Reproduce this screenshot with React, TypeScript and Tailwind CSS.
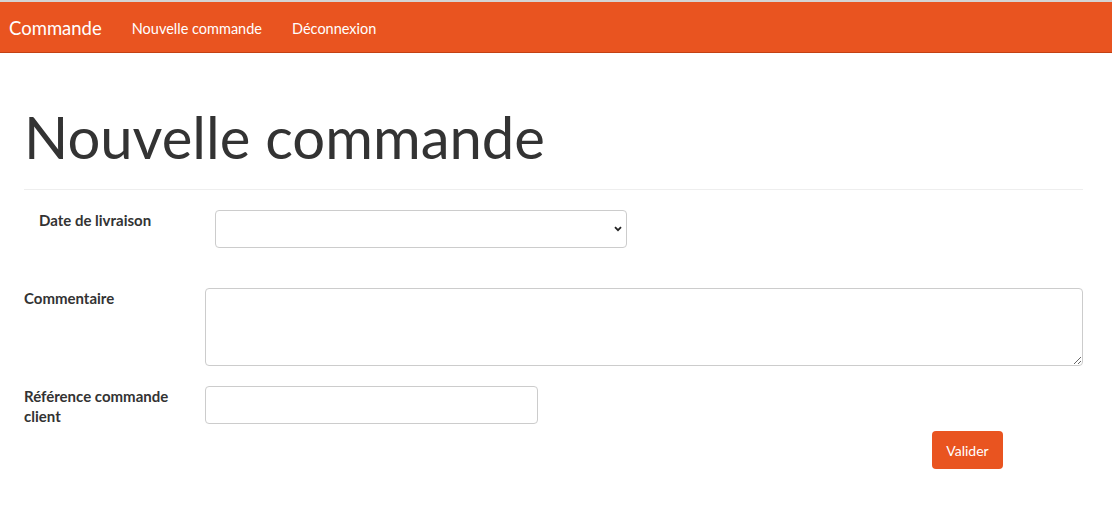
import React from 'react';

const font = { fontFamily: 'Lato, "Open Sans", sans-serif' };

const Navbar: React.FC = () => (
  <nav className="border-t-2 border-[#d4d4d4] bg-[#e95420] border-b border-b-[#c34113]">
    <div className="flex items-center h-[50px] pl-[9px] pt-[3px]">
      <span className="text-[18.5px] text-white mr-[30px]">Commande</span>
      <span className="text-[14.5px] text-white mr-[30px]">Nouvelle commande</span>
      <span className="text-[14.5px] text-white">Déconnexion</span>
    </div>
  </nav>
);

export default function App() {
  return (
    <div className="min-h-[506px] bg-white text-[#333]" style={font}>
      <Navbar />
      <main className="pl-6 pr-[29px]">
        <h1 className="text-[58px] leading-none font-normal text-[#333] mt-[55px] mb-[23px]">Nouvelle commande</h1>
        <hr className="border-t border-[#eeeeee]" />

        <div className="flex items-start mt-5">
          <label className="w-[176px] pl-[15px] text-[15px] font-bold leading-5 box-content">Date de livraison</label>
          <div className="relative w-[412px] h-[38px] border border-[#cccccc] rounded-[4px]">
            <svg className="absolute right-[4px] top-[15px]" width="8" height="6" viewBox="0 0 8 6">
              <path d="M1 1.2 L4 4.2 L7 1.2" fill="none" stroke="#222" strokeWidth="1.8" />
            </svg>
          </div>
        </div>

        <div className="flex items-start mt-10">
          <label className="w-[181px] text-[15px] font-bold leading-5">Commentaire</label>
          <textarea className="flex-1 h-[78px] border border-[#cccccc] rounded-[4px] resize-y outline-none" />
        </div>

        <div className="flex items-start mt-5">
          <label className="w-[181px] pr-[16px] text-[15px] font-bold leading-5">Référence commande client</label>
          <input className="w-[333px] h-[38px] border border-[#cccccc] rounded-[4px] outline-none" />
        </div>

        <div className="flex pl-[908px] mt-[5px]">
          <button className="w-[71px] h-[38px] bg-[#e95420] text-white text-[14px] rounded-[4px]">Valider</button>
        </div>
      </main>
    </div>
  );
}
